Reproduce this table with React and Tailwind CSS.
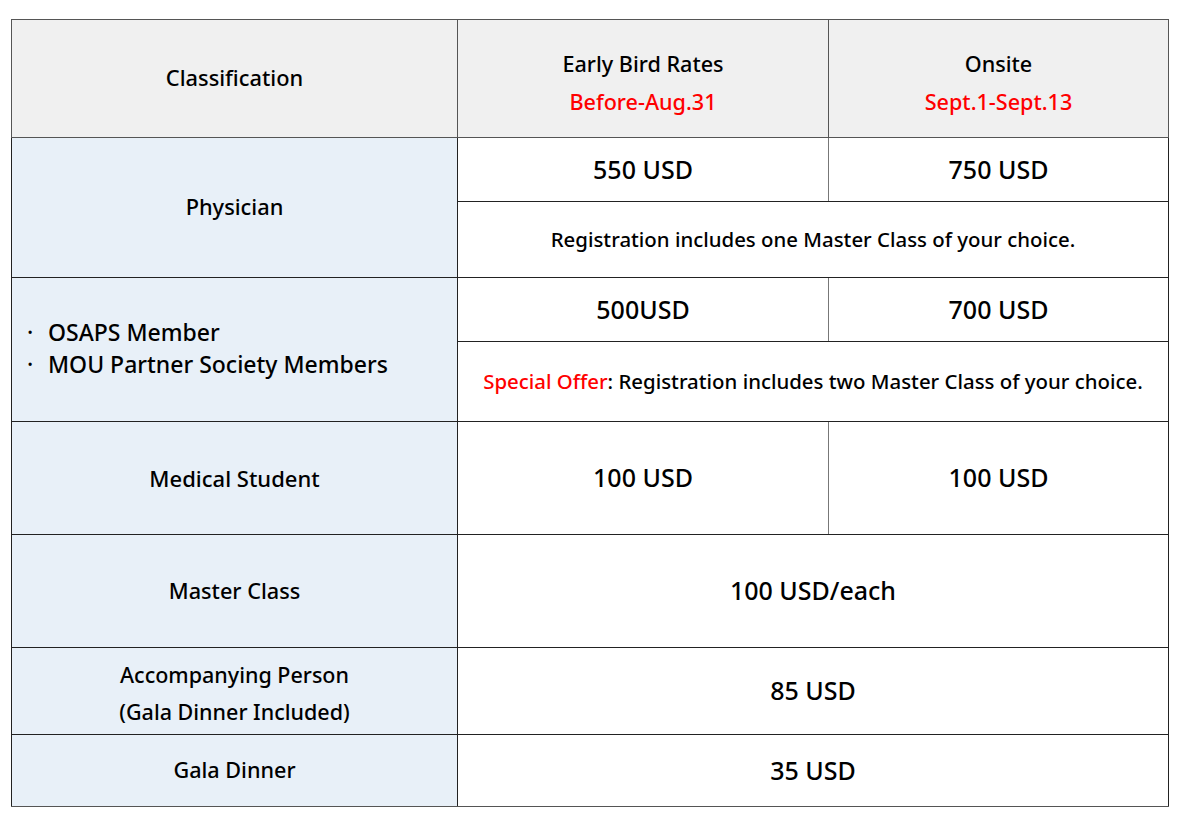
const red = 'text-[#ff0000]';

function Cell({ children, className = '', ...rest }) {
  return (
    <td className={`border border-[#222] text-center align-middle p-0 ${className}`} {...rest}>
      {children}
    </td>
  );
}

export default function App() {
  return (
    <div className="min-h-screen bg-white pt-[19px] pl-[11px]" style={{ fontFamily: '"Noto Sans", "Open Sans", sans-serif' }}>
      <table className="border-collapse w-[1157px] table-fixed text-black font-medium">
        <colgroup>
          <col className="w-[446px]" />
          <col className="w-[371px]" />
          <col className="w-[340px]" />
        </colgroup>
        <tbody>
          <tr className="h-[118px] bg-[#f0f0f0]">
            <Cell className="text-[21.8px] border-[#555]">Classification</Cell>
            <Cell className="text-[21.6px] border-[#555]">
              <div className="leading-[38px] mt-2">Early Bird Rates</div>
              <div className={`leading-[38px] ${red}`}>Before-Aug.31</div>
            </Cell>
            <Cell className="text-[21.6px] border-[#555]">
              <div className="leading-[38px] mt-2">Onsite</div>
              <div className={`leading-[38px] ${red}`}>Sept.1-Sept.13</div>
            </Cell>
          </tr>

          <tr className="h-[64px]">
            <Cell rowSpan={2} className="bg-[#e8f0f8] text-[21.8px]">Physician</Cell>
            <Cell className="text-[25px] border-r-[#777]">550 USD</Cell>
            <Cell className="text-[25px]">750 USD</Cell>
          </tr>
          <tr className="h-[76px]">
            <Cell colSpan={2} className="text-[20.4px]">Registration includes one Master Class of your choice.</Cell>
          </tr>

          <tr className="h-[64px]">
            <Cell rowSpan={2} className="bg-[#e8f0f8] text-[23px] !text-left">
              <div className="pl-[15px] leading-[32px] -mt-[3px]">
                <div>
                  <span className="inline-block w-[21px]">·</span>OSAPS Member
                </div>
                <div>
                  <span className="inline-block w-[21px]">·</span>MOU Partner Society Members
                </div>
              </div>
            </Cell>
            <Cell className="text-[25px] border-r-[#777]">500USD</Cell>
            <Cell className="text-[25px]">700 USD</Cell>
          </tr>
          <tr className="h-[80px]">
            <Cell colSpan={2} className="text-[20.4px]">
              <span className={red}>Special Offer</span>: Registration includes two Master Class of your choice.
            </Cell>
          </tr>

          <tr className="h-[113px]">
            <Cell className="bg-[#e8f0f8] text-[22px] border-t-[#666]">Medical Student</Cell>
            <Cell className="text-[25px] border-t-[#666] border-r-[#777]">100 USD</Cell>
            <Cell className="text-[25px] border-t-[#666]">100 USD</Cell>
          </tr>

          <tr className="h-[113px]">
            <Cell className="bg-[#e8f0f8] text-[21.7px]">Master Class</Cell>
            <Cell colSpan={2} className="text-[25px]">100 USD/each</Cell>
          </tr>

          <tr className="h-[87px]">
            <Cell className="bg-[#e8f0f8] text-[21.5px]">
              <div className="leading-[37px] mt-1">Accompanying Person</div>
              <div className="leading-[37px]">(Gala Dinner Included)</div>
            </Cell>
            <Cell colSpan={2} className="text-[25px]">85 USD</Cell>
          </tr>

          <tr className="h-[72px]">
            <Cell className="bg-[#e8f0f8] text-[21.6px] border-t-[#555] border-b-[#555]">Gala Dinner</Cell>
            <Cell colSpan={2} className="text-[25px] border-t-[#555] border-b-[#555]">35 USD</Cell>
          </tr>
        </tbody>
      </table>
    </div>
  );
}
